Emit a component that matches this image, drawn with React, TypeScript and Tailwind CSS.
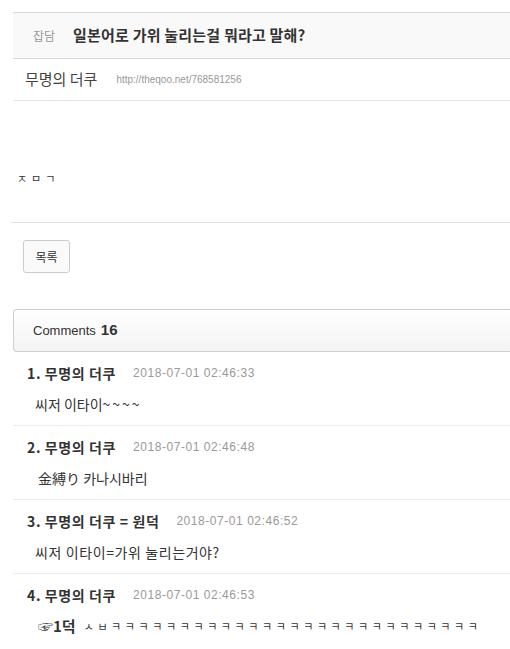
const KR = { fontFamily: '"Noto Sans CJK KR", "Noto Sans", sans-serif' };

type Comment = {
  no: number;
  name: string;
  date: string;
  body: React.ReactNode;
};

const comments: Comment[] = [
  {
    no: 1,
    name: '무명의 더쿠',
    date: '2018-07-01 02:46:33',
    body: (
      <>
        씨저 이타이<span className="tracking-[2px]">~~~~</span>
      </>
    ),
  },
  { no: 2, name: '무명의 더쿠', date: '2018-07-01 02:46:48', body: <span className="pl-[3px]">金縛り 카나시바리</span> },
  {
    no: 3,
    name: '무명의 더쿠 = 원덕',
    date: '2018-07-01 02:46:52',
    body: <span className="tracking-[0.6px]">씨저 이타이=가위 눌리는거야?</span>,
  },
  {
    no: 4,
    name: '무명의 더쿠',
    date: '2018-07-01 02:46:53',
    body: (
      <>
        <span className="pl-[3px] text-[15px] font-bold text-[#333]">☞1덕</span>
        <span className="ml-[8px] text-[11px] tracking-[3.6px]">ㅅㅂㅋㅋㅋㅋㅋㅋㅋㅋㅋㅋㅋㅋㅋㅋㅋㅋㅋㅋㅋㅋㅋㅋㅋㅋㅋㅋㅋ</span>
      </>
    ),
  },
];

function CommentItem({ c, last }: { c: Comment; last: boolean }) {
  return (
    <div className={`pt-[11px] pb-[11px] ${last ? '' : 'border-b border-[#ebebeb]'}`}>
      <div className="flex h-[20px] items-center pl-[14px]">
        <span className="text-[14px] font-bold tracking-[0.6px] text-[#333]" style={KR}>
          {c.no}. {c.name}
        </span>
        <span className="ml-[17px] font-['Liberation_Sans'] text-[12px] tracking-[0.55px] text-[#999]">{c.date}</span>
      </div>
      <div className="mt-[11px] flex h-[20px] items-center whitespace-nowrap pl-[22px] text-[14px] text-[#333]" style={KR}>
        {c.body}
      </div>
    </div>
  );
}

export default function App() {
  return (
    <div className="min-h-[649px] overflow-hidden bg-white pt-[12px]" style={KR}>
      <div className="ml-[13px] border-t border-[#d9d9d9]">
        <div className="flex h-[46px] items-center border-b border-[#d9d9d9] bg-[#f9f9f9] pl-[20px]">
          <span className="text-[12px] text-[#999]">잡담</span>
          <h1 className="ml-[18px] text-[15px] font-bold tracking-[0.2px] text-[#333]">일본어로 가위 눌리는걸 뭐라고 말해?</h1>
        </div>
        <div className="flex h-[42px] items-center border-b border-[#e5e5e5] pl-[12px]">
          <span className="text-[15px] text-[#444]">무명의 더쿠</span>
          <span className="ml-[19px] font-['Liberation_Sans'] text-[10px] text-[#999]">http://theqoo.net/768581256</span>
        </div>
      </div>

      <div className="h-[121px] pl-[17px] pt-[69px] text-[11px] tracking-[4px] text-[#333]">ㅈㅁㄱ</div>

      <div className="ml-[11px] border-t border-[#e0e0e0]" />

      <div className="pl-[23px] pt-[17px]">
        <button className="h-[33px] w-[47px] rounded-[3px] border border-[#ccc] bg-[#fafafa] text-[12px] text-[#333]">
          목록
        </button>
      </div>

      <div className="ml-[13px] mt-[36px] flex h-[43px] items-center rounded-l-[4px] border border-r-0 border-[#cfcfcf] bg-gradient-to-b from-white to-[#f4f4f4] pl-[19px]">
        <span className="font-['Liberation_Sans'] text-[13px] text-[#333]">Comments</span>
        <span className="ml-[5px] font-['Liberation_Sans'] text-[15px] font-bold text-[#333]">16</span>
      </div>

      <div className="ml-[13px]">
        {comments.map((c, i) => (
          <CommentItem key={c.no} c={c} last={i === comments.length - 1} />
        ))}
      </div>
    </div>
  );
}
